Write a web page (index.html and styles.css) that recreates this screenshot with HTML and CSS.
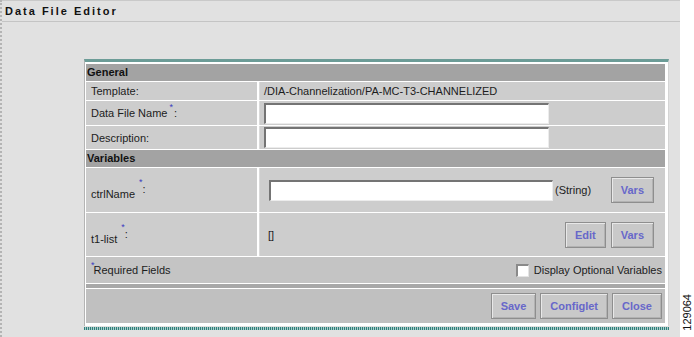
FILE: index.html
```html
<!DOCTYPE html>
<html lang="en">
<head>
  <meta charset="UTF-8" />
  <title>Data File Editor</title>
  <link rel="stylesheet" href="styles.css">
</head>
<body>

<div class="screen">
  <div class="page">
    <div class="title">Data File Editor</div>

    <div class="panel">
      <div class="section">General</div>

      <div class="row row-template">
        <div class="label"><span>Template:</span></div>
        <div class="value">/DIA-Channelization/PA-MC-T3-CHANNELIZED</div>
      </div>

      <div class="row row-field">
        <div class="label"><span>Data File Name<sup class="req">*</sup>:</span></div>
        <div class="value"><input class="text-input" type="text"></div>
      </div>

      <div class="row row-field row-desc">
        <div class="label"><span>Description:</span></div>
        <div class="value"><input class="text-input" type="text"></div>
      </div>

      <div class="section">Variables</div>

      <div class="row row-var">
        <div class="label"><span>ctrlName <span class="mark"><sup class="req">*</sup>:</span></span></div>
        <div class="value">
          <input class="text-input var-input" type="text">
          <span class="type">(String)</span>
          <div class="tools">
            <button class="btn">Vars</button>
          </div>
        </div>
      </div>

      <div class="row row-var row-list">
        <div class="label"><span>t1-list <span class="mark"><sup class="req">*</sup>:</span></span></div>
        <div class="value">
          <span class="list">[]</span>
          <div class="tools">
            <button class="btn">Edit</button>
            <button class="btn">Vars</button>
          </div>
        </div>
      </div>

      <div class="required-row">
        <span class="required-note"><sup class="req">*</sup>Required Fields</span>
        <label class="optional"><span class="check"></span>Display Optional Variables</label>
      </div>

      <div class="divider"></div>

      <div class="actions">
        <button class="btn">Save</button>
        <button class="btn">Configlet</button>
        <button class="btn">Close</button>
      </div>
    </div>
    <div class="panel-edge"></div>
  </div>

  <div class="strip">
    <span class="fig-number">129064</span>
  </div>
</div>

</body>
</html>
```

FILE: styles.css
```css
body {
  margin: 0;
  font-family: "Liberation Sans", Arial, sans-serif;
  font-size: 11px;
  color: #1c1c1c;
  background-color: #fff;
}

.screen {
  display: flex;
  width: 694px;
  height: 337px;
  overflow: hidden;
}

.page {
  width: 678px;
  background-color: #e1e1e1;
  border-left: 2px dotted #b4b4b4;
}

.strip {
  flex: 1;
  display: flex;
  flex-direction: column;
  justify-content: flex-end;
  align-items: center;
  padding-bottom: 6px;
  background-color: #fff;
}

.fig-number {
  writing-mode: vertical-rl;
  transform: rotate(180deg);
  font-size: 11px;
  color: #111;
}

.title {
  height: 20px;
  line-height: 21px;
  padding-left: 3px;
  border-top: 1px solid #c9c9c9;
  border-bottom: 1px solid #c4c4c4;
  font-weight: bold;
  letter-spacing: 2px;
  color: #111;
}

.panel {
  width: 585px;
  box-sizing: border-box;
  margin: 37px 0 0 82px;
  padding: 2px 3px 3px 1px;
  background-color: #fff;
  border-top: 3px solid #6c9c97;
  border-left: 1px solid #b4b4b4;
  border-right: 1px solid #d4d4d4;
  display: flex;
  flex-direction: column;
  gap: 1px;
}

.panel-edge {
  width: 585px;
  height: 3px;
  margin: 1px 0 0 82px;
  background: repeating-linear-gradient(90deg, #2f7f7b 0 1px, #a9cdca 1px 2px);
}

.section {
  height: 17px;
  line-height: 17px;
  padding-left: 1px;
  background-color: #a3a3a3;
  font-weight: bold;
  color: #111;
}

.row {
  display: grid;
  grid-template-columns: 171px 1fr;
  column-gap: 2px;
}

.row .label,
.row .value {
  display: flex;
  align-items: center;
  background-color: #cdcdcd;
}

.row .label {
  padding-left: 5px;
}

.row .value {
  border-left: 1px solid #dadada;
  padding-left: 4px;
}

.row-template {
  height: 18px;
}

.row-field {
  height: 24px;
}

.row-desc {
  height: 23px;
}

.row-var {
  height: 44px;
}

.row-var .label {
  padding-top: 2px;
  box-sizing: border-box;
}

.row-list {
  height: 43px;
}

.req {
  font-size: 9px;
  color: #3b3bc0;
  vertical-align: 7px;
  line-height: 0;
  margin: 0 1px 0 2px;
}

.mark {
  display: inline-block;
  vertical-align: 5px;
  margin-left: 1px;
}

.mark .req {
  vertical-align: 8px;
  margin: 0;
}

.text-input {
  width: 285px;
  height: 21px;
  box-sizing: border-box;
  margin: 0;
  padding: 0 3px;
  background-color: #fff;
  border-top: 2px solid #747474;
  border-left: 2px solid #747474;
  border-right: 1px solid #ececec;
  border-bottom: 1px solid #ececec;
  font-family: inherit;
  font-size: 11px;
}

.var-input {
  width: 284px;
  margin-left: 5px;
}

.type {
  margin-left: 2px;
}

.list {
  margin-left: 4px;
}

.tools {
  display: flex;
  gap: 5px;
  margin-left: auto;
  margin-right: 11px;
}

.btn {
  height: 26px;
  margin: 0;
  padding: 0 9px;
  background-color: #c9c9c9;
  border: 1px solid #8e8e8e;
  box-shadow: inset 1px 1px 0 #e8e8e8, inset -1px -1px 0 #b2b2b2;
  font-family: inherit;
  font-size: 11px;
  font-weight: bold;
  color: #6767c9;
  cursor: pointer;
}

.required-row {
  height: 26px;
  display: flex;
  align-items: center;
  justify-content: space-between;
  padding: 0 3px 0 5px;
  background-color: #c4c4c4;
}

.required-note .req {
  vertical-align: 6px;
  margin: 0 -1px 0 0;
}

.optional {
  display: flex;
  align-items: center;
  gap: 5px;
}

.check {
  width: 13px;
  height: 13px;
  box-sizing: border-box;
  background-color: #fff;
  border-top: 2px solid #8a8a8a;
  border-left: 2px solid #8a8a8a;
  border-right: 1px solid #e4e4e4;
  border-bottom: 1px solid #e4e4e4;
}

.divider {
  height: 4px;
  background-color: #a8a8a8;
}

.actions {
  height: 34px;
  display: flex;
  align-items: center;
  justify-content: flex-end;
  gap: 4px;
  padding-right: 3px;
  background-color: #c0c0c0;
}
```
